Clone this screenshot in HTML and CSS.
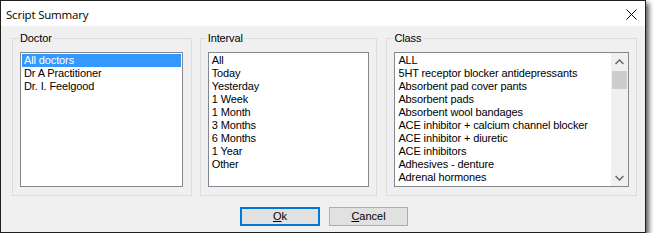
FILE: index.html
```html
<!DOCTYPE html>
<html lang="en">
<head>
    <meta charset="UTF-8">
    <title>Script Summary</title>
    <link rel="stylesheet" href="styles.css">
</head>
<body>
    <div class="window">
        <header class="titlebar">
            <span class="title">Script Summary</span>
            <!-- Close button -->
            <svg class="close" width="11" height="11" viewBox="0 0 11 11">
                <path d="M0.5 0.5 L10.5 10.5 M10.5 0.5 L0.5 10.5" stroke="#000" stroke-width="1" fill="none"/>
            </svg>
        </header>
        <div class="content">
            <div class="groups">
                <div class="group doctor">
                    <span class="legend">Doctor</span>
                    <ul class="list">
                        <li class="selected">All doctors</li>
                        <li>Dr A Practitioner</li>
                        <li>Dr. I. Feelgood</li>
                    </ul>
                </div>
                <div class="group interval">
                    <span class="legend">Interval</span>
                    <ul class="list">
                        <li>All</li>
                        <li>Today</li>
                        <li>Yesterday</li>
                        <li>1 Week</li>
                        <li>1 Month</li>
                        <li>3 Months</li>
                        <li>6 Months</li>
                        <li>1 Year</li>
                        <li>Other</li>
                    </ul>
                </div>
                <div class="group class">
                    <span class="legend">Class</span>
                    <div class="list scrolling">
                        <ul class="items">
                            <li>ALL</li>
                            <li>5HT receptor blocker antidepressants</li>
                            <li>Absorbent pad cover pants</li>
                            <li>Absorbent pads</li>
                            <li>Absorbent wool bandages</li>
                            <li>ACE inhibitor + calcium channel blocker</li>
                            <li>ACE inhibitor + diuretic</li>
                            <li>ACE inhibitors</li>
                            <li>Adhesives - denture</li>
                            <li>Adrenal hormones</li>
                        </ul>
                        <!-- Vertical scrollbar -->
                        <div class="scrollbar">
                            <div class="arrow">
                                <svg width="9" height="6" viewBox="0 0 9 6"><path d="M0.5 5 L4.5 1 L8.5 5" stroke="#606060" stroke-width="1.3" fill="none"/></svg>
                            </div>
                            <div class="track">
                                <div class="thumb"></div>
                            </div>
                            <div class="arrow">
                                <svg width="9" height="6" viewBox="0 0 9 6"><path d="M0.5 1 L4.5 5 L8.5 1" stroke="#606060" stroke-width="1.3" fill="none"/></svg>
                            </div>
                        </div>
                    </div>
                </div>
            </div>
            <div class="buttons">
                <button class="btn default"><u>O</u>k</button>
                <button class="btn"><u>C</u>ancel</button>
            </div>
        </div>
    </div>
</body>
</html>
```

FILE: styles.css
```css
* {
    margin: 0;
    padding: 0;
    box-sizing: border-box;
}
body {
    background: #fff;
    font-family: 'Liberation Sans', Arial, sans-serif;
    font-size: 11px;
    letter-spacing: -0.12px;
    color: #000;
}
.window {
    width: 646px;
    height: 233px;
    border: 1px solid #1f1f1f;
    background: #f0f0f0;
    box-shadow: 3px 3px 5px rgba(0, 0, 0, 0.65);
    display: flex;
    flex-direction: column;
}
.titlebar {
    height: 25px;
    background: #fff;
    display: flex;
    align-items: center;
    justify-content: space-between;
    padding: 0 8px 0 5px;
}
.titlebar .title {
    font-family: 'Open Sans', sans-serif;
    font-size: 11.5px;
    letter-spacing: -0.2px;
    margin-top: 1px;
}
.titlebar .close {
    display: block;
    margin-top: 1px;
}
.content {
    flex: 1;
    padding: 12px 8px 0 11px;
}
.groups {
    display: flex;
    gap: 8px;
}
.group {
    position: relative;
    height: 158px;
    border: 1px solid #dcdcdc;
    padding: 13px 7px 8px 7px;
    display: flex;
}
.group.doctor {
    width: 180px;
    padding-right: 8px;
}
.group.interval {
    width: 178px;
}
.group.class {
    width: 251px;
    margin-left: 1px;
}
.legend {
    position: absolute;
    top: -7px;
    left: 6px;
    padding: 0 2px 0 1px;
    background: #f0f0f0;
    line-height: 13px;
}
.list {
    flex: 1;
    height: 135px;
    background: #fff;
    border: 1px solid #828790;
    list-style: none;
    padding: 1px;
}
.list li {
    height: 13px;
    line-height: 13px;
    padding-left: 2px;
    white-space: nowrap;
}
.list li.selected {
    background: #3399ff;
    color: #fff;
}
.list.scrolling {
    display: flex;
    padding: 0;
}
.list .items {
    flex: 1;
    list-style: none;
    padding: 1px;
}
.scrollbar {
    width: 17px;
    background: #f0f0f0;
    display: flex;
    flex-direction: column;
}
.scrollbar .arrow {
    height: 17px;
    display: flex;
    align-items: center;
    justify-content: center;
}
.scrollbar .track {
    flex: 1;
}
.scrollbar .thumb {
    height: 18px;
    margin: 1px 1px 0;
    background: #cdcdcd;
}
.buttons {
    display: flex;
    justify-content: center;
    gap: 9px;
    margin-top: 11px;
    padding-right: 1px;
}
.btn {
    width: 79px;
    height: 19px;
    background: #e1e1e1;
    border: 1px solid #adadad;
    font-family: 'Liberation Sans', Arial, sans-serif;
    font-size: 11px;
    color: #000;
    line-height: 15px;
}
.btn.default {
    width: 80px;
    border: 2px solid #0078d7;
}
.btn u {
    text-underline-offset: 1px;
}
```
